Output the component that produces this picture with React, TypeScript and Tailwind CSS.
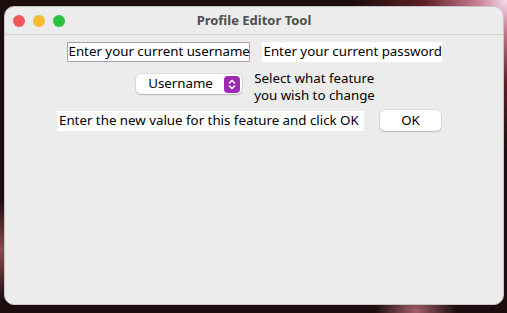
function TrafficLights() {
  return (
    <div className="absolute left-[8px] top-[8px] flex gap-[8px]">
      <span className="w-[12px] h-[12px] rounded-full bg-[#ee5b56]" />
      <span className="w-[12px] h-[12px] rounded-full bg-[#f6bb2f]" />
      <span className="w-[12px] h-[12px] rounded-full bg-[#2cc13e]" />
    </div>
  );
}

function Stepper() {
  return (
    <span className="w-[16px] h-[17px] rounded-[4px] bg-[#a12ab5] flex items-center justify-center">
      <svg width="8" height="11" viewBox="0 0 8 11" fill="none" stroke="white" strokeWidth="1.6" strokeLinecap="round" strokeLinejoin="round">
        <path d="M1.5 4 L4 1.5 L6.5 4" />
        <path d="M1.5 7 L4 9.5 L6.5 7" />
      </svg>
    </span>
  );
}

export default function App() {
  return (
    <div
      className="w-[507px] h-[313px] pt-[6px] pl-[4px] bg-[#1c0c0e] bg-[radial-gradient(circle_at_100%_0%,#f6dcef_0%,#c97c92_5%,#5c2024_14%,transparent_26%),radial-gradient(circle_at_0%_80%,#8a4a50_0%,transparent_9%),radial-gradient(circle_at_82%_100%,#a06068_0%,transparent_8%)]"
      style={{ fontFamily: '"Noto Sans", sans-serif' }}
    >
      {/* Window */}
      <div className="w-[500px] h-[299px] rounded-[10px] bg-[#ececec] overflow-hidden border border-[#c9c4c5] flex flex-col">
        {/* Title bar */}
        <div className="relative h-[28px] shrink-0 border-b border-[#d5d5d5] flex items-center justify-center">
          <TrafficLights />
          <span className="text-[13px] font-bold text-[#4e4e4e]">Profile Editor Tool</span>
        </div>

        {/* Content */}
        <div className="flex flex-col items-center text-[13.3px] text-black">
          <div className="flex items-center gap-[12px] mt-[7px]">
            <div className="h-[20px] w-[183px] bg-white border border-[#b49ab8] flex items-center pl-[1px] whitespace-nowrap">
              Enter your current username
            </div>
            <div className="h-[20px] w-[180px] bg-white flex items-center px-[2px] whitespace-nowrap">
              Enter your current password
            </div>
          </div>

          <div className="flex items-start gap-[12px] mt-[8px] ml-[3px]">
            <div className="mt-[4px] h-[20px] w-[106px] bg-white rounded-[5px] shadow-[0_0_0_0.5px_rgba(0,0,0,0.12),0_1px_1.5px_rgba(0,0,0,0.18)] flex items-center justify-between pl-[12px] pr-[2px]">
              <span>Username</span>
              <Stepper />
            </div>
            <div className="leading-[17px] whitespace-nowrap">
              <div>Select what feature</div>
              <div>you wish to change</div>
            </div>
          </div>

          <div className="flex items-center gap-[16px] mt-[6px] mr-[10px]">
            <div className="h-[20px] w-[307px] bg-white flex items-center px-[2px] whitespace-nowrap">
              Enter the new value for this feature and click OK
            </div>
            <button className="h-[21px] w-[61px] bg-white rounded-[5px] shadow-[0_0_0_0.5px_rgba(0,0,0,0.12),0_1px_1.5px_rgba(0,0,0,0.18)]">
              OK
            </button>
          </div>
        </div>
      </div>
    </div>
  );
}
